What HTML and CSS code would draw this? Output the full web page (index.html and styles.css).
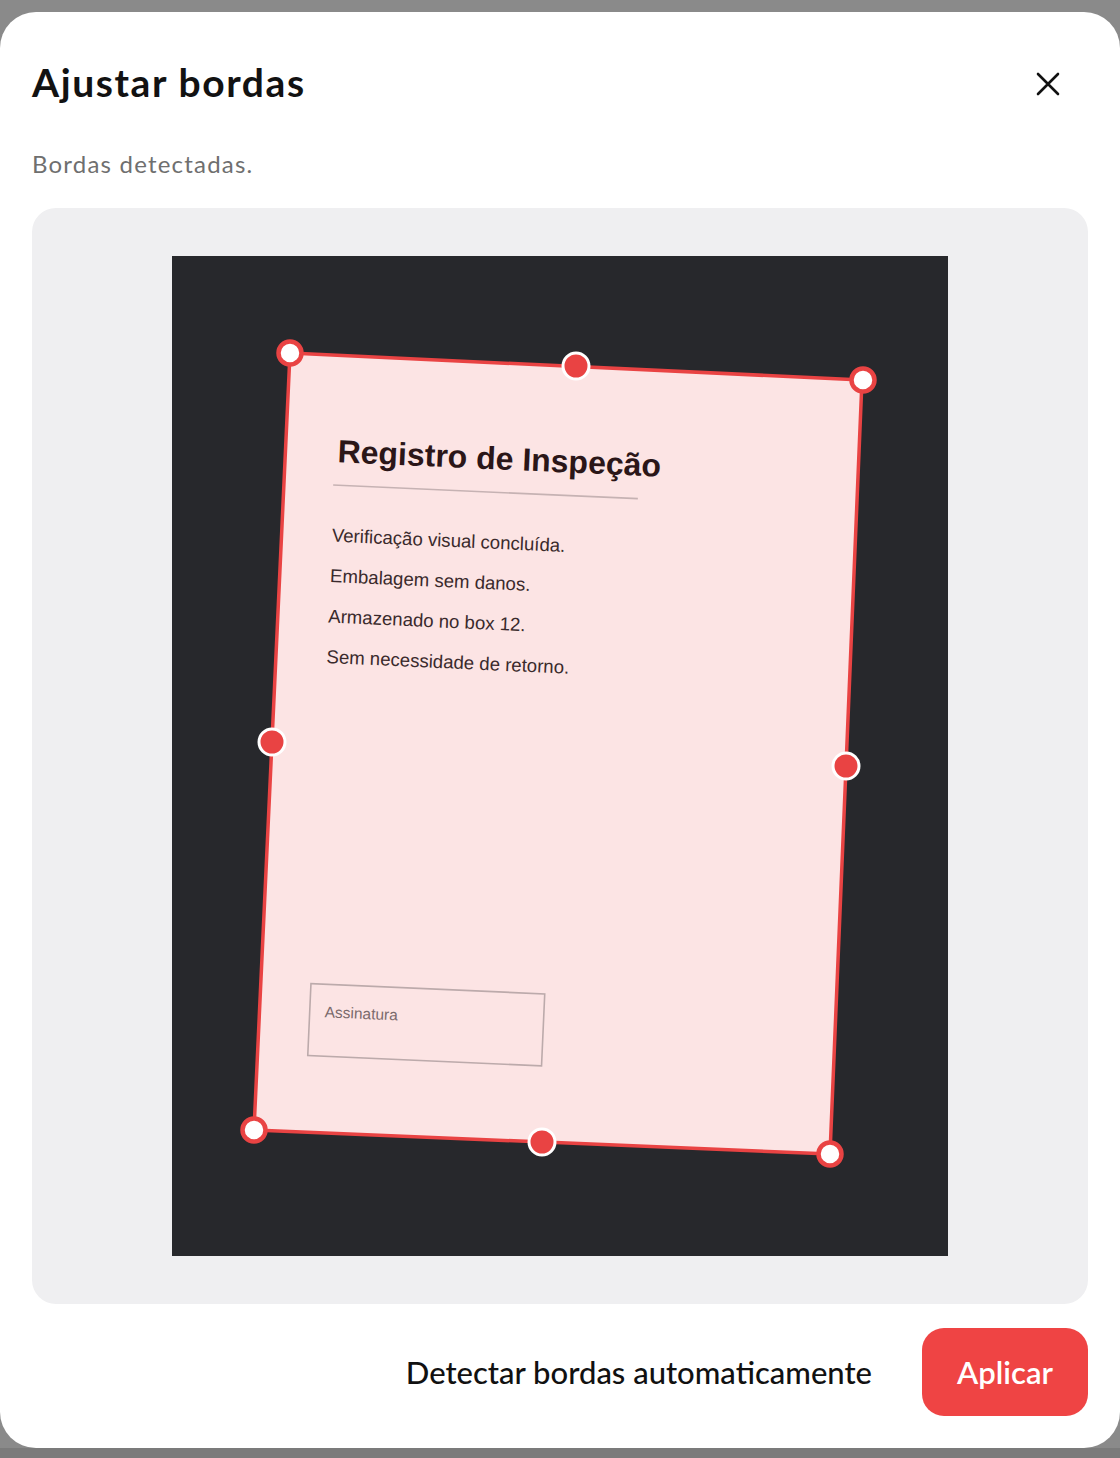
FILE: index.html
```html
<!DOCTYPE html>
<html lang="pt">
<head>
<meta charset="utf-8">
<title>Ajustar bordas</title>
<link rel="stylesheet" href="styles.css">
</head>
<body>
<div class="modal">
  <div class="header">
    <h1 class="title">Ajustar bordas</h1>
    <button class="close" aria-label="Fechar">
      <svg width="28" height="28" viewBox="0 0 28 28"><path d="M4 4 L24 24 M24 4 L4 24" stroke="#111" stroke-width="2.6" stroke-linecap="round" fill="none"/></svg>
    </button>
  </div>
  <p class="subtitle">Bordas detectadas.</p>
  <div class="canvas">
    <svg class="photo" width="776" height="1000" viewBox="0 0 776 1000">
      <rect x="0" y="0" width="776" height="1000" fill="#27282c"/>
      <polygon points="118,97 690,124 658,898 82,874" fill="#fce4e4"/>
      <g transform="translate(118 97) rotate(2.55)" font-family="'Liberation Sans', Arial, sans-serif">
        <text x="52" y="107" font-size="32" font-weight="700" fill="#2b1618">Registro de Inspeção</text>
        <line x1="49" y1="130" x2="354" y2="130" stroke="#c6b2b3" stroke-width="1.6"/>
        <text x="50" y="186.5" font-size="18.6" fill="#3a2a2c">Verificação visual concluída.</text>
        <text x="50" y="227" font-size="18.6" fill="#3a2a2c">Embalagem sem danos.</text>
        <text x="50" y="267.5" font-size="18.6" fill="#3a2a2c">Armazenado no box 12.</text>
        <text x="50" y="308" font-size="18.6" fill="#3a2a2c">Sem necessidade de retorno.</text>
        <rect x="49" y="629" width="234" height="72" fill="none" stroke="#bcaaab" stroke-width="1.6"/>
        <text x="64" y="662" font-size="15.5" fill="#7a6a6c">Assinatura</text>
      </g>
      <polygon points="118,97 690,124 658,898 82,874" fill="none" stroke="#e94343" stroke-width="3.5" stroke-linejoin="round"/>
      <g fill="#e94343" stroke="#ffffff" stroke-width="3">
        <circle cx="404" cy="110" r="13"/>
        <circle cx="674" cy="510" r="13"/>
        <circle cx="370" cy="886" r="13"/>
        <circle cx="100" cy="486" r="13"/>
      </g>
      <g fill="#ffffff" stroke="#e94343" stroke-width="4.5">
        <circle cx="118" cy="97" r="11.5"/>
        <circle cx="691" cy="124" r="11.5"/>
        <circle cx="658" cy="898" r="11.5"/>
        <circle cx="82" cy="874" r="11.5"/>
      </g>
    </svg>
  </div>
  <div class="footer">
    <button class="btn-text">Detectar bordas automaticamente</button>
    <button class="btn-primary">Aplicar</button>
  </div>
</div>
</body>
</html>
```
FILE: styles.css
```css
html, body {
  margin: 0;
  padding: 0;
}
body {
  width: 1120px;
  height: 1458px;
  overflow: hidden;
  background: linear-gradient(#8a8a8a 0, #8a8a8a 1448px, #7b7b7b 1448px);
  font-family: Lato, "Noto Sans", sans-serif;
}
.modal {
  margin-top: 12px;
  height: 1436px;
  box-sizing: border-box;
  background: #ffffff;
  border-radius: 36px;
  padding: 0 32px;
  display: flex;
  flex-direction: column;
}
.header {
  display: flex;
  justify-content: space-between;
  align-items: center;
  padding-top: 48px;
  height: 44px;
}
.title {
  margin: 0;
  font-size: 39px;
  line-height: 44px;
  font-weight: 700;
  letter-spacing: 1.6px;
  color: #121212;
}
.close {
  border: 0;
  background: none;
  padding: 0;
  margin-right: 26px;
  margin-top: 4px;
  width: 28px;
  height: 28px;
  display: flex;
}
.subtitle {
  margin: 0;
  margin-top: 44px;
  font-size: 24px;
  line-height: 32px;
  letter-spacing: 1.2px;
  color: #6f6f6f;
}
.canvas {
  margin-top: 28px;
  height: 1096px;
  box-sizing: border-box;
  background: #efeff1;
  border-radius: 24px;
  padding-top: 48px;
  display: flex;
  justify-content: center;
  align-items: flex-start;
}
.photo {
  display: block;
}
.footer {
  margin-top: 24px;
  display: flex;
  justify-content: flex-end;
  align-items: center;
  gap: 50px;
}
.btn-text {
  border: 0;
  background: none;
  padding: 0;
  font-family: inherit;
  font-size: 31px;
  font-weight: 500;
  color: #111111;
}
.btn-primary {
  border: 0;
  height: 88px;
  width: 166px;
  border-radius: 22px;
  background: #ef4444;
  color: #ffffff;
  font-family: inherit;
  font-size: 31px;
  font-weight: 600;
}
```
